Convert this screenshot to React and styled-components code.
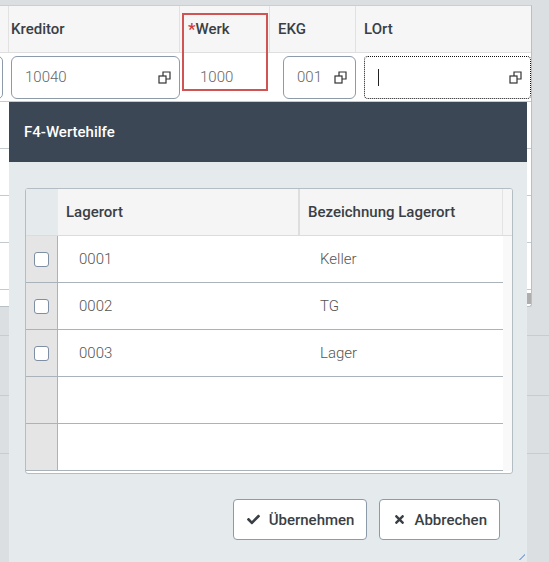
import React from "react";
import styled, { createGlobalStyle } from "styled-components";
import { FaCheck, FaTimes } from "react-icons/fa";

const GlobalStyle = createGlobalStyle`
  html, body {
    margin: 0;
    padding: 0;
    background: #dcdfe2;
    font-family: Roboto, "Liberation Sans", sans-serif;
    overflow: hidden;
  }
`;

const RestoreIcon = () => (
  <svg width="13" height="13" viewBox="0 0 13 13" fill="none" stroke="#333" strokeWidth="1.2">
    <rect x="1" y="5" width="7" height="7" />
    <path d="M5 5 V1 H12 V8 H8" />
  </svg>
);

const rows = [
  { key: "0001", label: "Keller" },
  { key: "0002", label: "TG" },
  { key: "0003", label: "Lager" },
  { key: "", label: "" },
  { key: "", label: "" },
];

const App = () => {
  return (
    <Page>
      <GlobalStyle />
      <TopStrip />
      <BgTable>
        <HeadRow>
          <HeadCell />
          <HeadCell>Kreditor</HeadCell>
          <HeadCell>
            <Req>*</Req>Werk
          </HeadCell>
          <HeadCell>EKG</HeadCell>
          <HeadCell $last>LOrt</HeadCell>
        </HeadRow>
        <InputRow>
          <InputCell $pl={0}>
            <PartialInput />
          </InputCell>
          <InputCell $pl={8}>
            <Field>
              <span>10040</span>
              <RestoreIcon />
            </Field>
          </InputCell>
          <InputCell $pl={0}>
            <PlainValue>1000</PlainValue>
          </InputCell>
          <InputCell $pl={13}>
            <Field>
              <span>001</span>
              <RestoreIcon />
            </Field>
          </InputCell>
          <InputCell $pl={8} $last>
            <Field $focused>
              <Caret />
              <RestoreIcon />
            </Field>
          </InputCell>
        </InputRow>
        <BgRow />
        <BgRow />
        <BgRow />
        <BgRow />
        <BgRow $short>
          <Thumb />
        </BgRow>
        <Highlight />
      </BgTable>
      <GreyRows>
        <GreyLine $h={28} />
        <GreyLine $h={59} />
        <GreyLine $h={57} />
      </GreyRows>

      <Dialog>
        <DialogHeader>F4-Wertehilfe</DialogHeader>
        <DialogBody>
          <HelpTable>
            <HelpHead>
              <CheckHead />
              <HelpHeadCell $sep>Lagerort</HelpHeadCell>
              <HelpHeadCell>Bezeichnung Lagerort</HelpHeadCell>
              <GutterHead />
            </HelpHead>
            {rows.map((row, i) => (
              <HelpRow key={i}>
                <CheckCell>{row.key && <Box />}</CheckCell>
                <HelpCell $pl={21}>{row.key}</HelpCell>
                <HelpCell $pl={20}>{row.label}</HelpCell>
                <Gutter />
              </HelpRow>
            ))}
          </HelpTable>
          <ButtonBar>
            <Button $gap={9}>
              <FaCheck size={13} />
              Übernehmen
            </Button>
            <Button $gap={8}>
              <FaTimes size={13} />
              Abbrechen
            </Button>
          </ButtonBar>
        </DialogBody>
        <Grip />
      </Dialog>
    </Page>
  );
};

const Page = styled.div`
  position: relative;
  width: 549px;
  height: 562px;
  overflow: hidden;
`;

const TopStrip = styled.div`
  height: 5px;
`;

const BgTable = styled.div`
  position: relative;
  width: 531px;
  background: #fff;
  border-top: 1px solid #c9cfd4;
  border-right: 1px solid #b8c0c7;
  border-bottom: 1px solid #b8c0c7;
  border-bottom-right-radius: 3px;
`;

const HeadRow = styled.div`
  display: grid;
  grid-template-columns: 3px 177px 90px 86px 175px;
  height: 46px;
  background: #f6f6f6;
  border-bottom: 1px solid #dedede;
`;

const HeadCell = styled.div`
  display: flex;
  align-items: center;
  padding-left: 8px;
  border-right: ${(p) => (p.$last ? "none" : "1px solid #e2e2e2")};
  font-size: 15px;
  font-weight: 500;
  color: #3a3f45;
  white-space: nowrap;
  overflow: hidden;
`;

const Req = styled.span`
  color: #d0393e;
  font-size: 17px;
`;

const InputRow = styled.div`
  display: grid;
  grid-template-columns: 3px 177px 90px 86px 175px;
  height: 48px;
  border-bottom: 1px solid #c3cad0;
`;

const InputCell = styled.div`
  display: flex;
  align-items: center;
  padding: 3px 0 3px ${(p) => p.$pl}px;
  overflow: hidden;
`;

const PartialInput = styled.div`
  width: 10px;
  height: 41px;
  margin-left: -7px;
  border: 1px solid #8d9aaa;
  border-radius: 6px;
`;

const Field = styled.div`
  flex: 1;
  height: 41px;
  display: flex;
  align-items: center;
  justify-content: space-between;
  padding: 0 8px 0 13px;
  border: 1px ${(p) => (p.$focused ? "dotted #111" : "solid #8d9aaa")};
  border-radius: ${(p) => (p.$focused ? "4px" : "6px")};
  font-size: 15px;
  font-weight: 300;
  color: #666;
`;

const Caret = styled.div`
  width: 1px;
  height: 17px;
  background: #222;
`;

const PlainValue = styled.div`
  padding-left: 20px;
  font-size: 15px;
  font-weight: 300;
  color: #666;
`;

const Highlight = styled.div`
  position: absolute;
  left: 182px;
  top: 7px;
  width: 82px;
  height: 74px;
  border: 2px solid #d05454;
`;

const BgRow = styled.div`
  position: relative;
  height: ${(p) => (p.$short ? "16px" : "46px")};
  border-bottom: ${(p) => (p.$short ? "none" : "1px solid #c3cad0")};
`;

const Thumb = styled.div`
  position: absolute;
  right: 0;
  top: 3px;
  width: 4px;
  height: 11px;
  background: #aeaeae;
`;

const GreyRows = styled.div`
  display: flex;
  flex-direction: column;
`;

const GreyLine = styled.div`
  height: ${(p) => p.$h}px;
  border-bottom: 1px solid #c8ccd0;
`;

const Dialog = styled.div`
  position: absolute;
  left: 9px;
  top: 102px;
  width: 518px;
  height: 470px;
  background: #e5eaed;
  display: flex;
  flex-direction: column;
`;

const DialogHeader = styled.div`
  height: 60px;
  display: flex;
  align-items: center;
  padding-left: 15px;
  background: #3b4754;
  color: #fff;
  font-size: 15px;
  font-weight: 500;
`;

const DialogBody = styled.div`
  padding: 26px 14px 0 16px;
  display: flex;
  flex-direction: column;
`;

const HelpTable = styled.div`
  height: 284px;
  overflow: hidden;
  background: #fff;
  border: 1px solid #b4bcc4;
  border-radius: 3px;
`;

const HelpHead = styled.div`
  display: grid;
  grid-template-columns: 32px 242px 203px 1fr;
  height: 46px;
  border-bottom: 1px solid #dcdcdc;
  background: #f5f5f5;
`;

const CheckHead = styled.div`
  background: #e5eaed;
`;

const HelpHeadCell = styled.div`
  display: flex;
  align-items: center;
  padding-left: 8px;
  font-size: 15px;
  font-weight: 500;
  color: #3a3f45;
  border-right: ${(p) => (p.$sep ? "2px solid #dedede" : "1px solid #e4e4e4")};
  white-space: nowrap;
`;

const GutterHead = styled.div``;

const HelpRow = styled.div`
  display: grid;
  grid-template-columns: 32px 242px 203px 1fr;
  height: 47px;
`;

const CheckCell = styled.div`
  display: flex;
  align-items: center;
  justify-content: center;
  background: #e5e5e5;
  border-right: 1px solid #aab2ba;
  border-bottom: 1px solid #aab2ba;
`;

const Box = styled.div`
  width: 13px;
  height: 13px;
  background: #fff;
  border: 1px solid #7f8fa3;
  border-radius: 3px;
`;

const HelpCell = styled.div`
  display: flex;
  align-items: center;
  padding-left: ${(p) => p.$pl}px;
  font-size: 15px;
  font-weight: 300;
  color: #555;
  border-bottom: 1px solid #aab2ba;
`;

const Gutter = styled.div`
  background: #f9f9f9;
`;

const ButtonBar = styled.div`
  display: flex;
  justify-content: flex-end;
  gap: 12px;
  padding: 25px 13px 0 0;
`;

const Button = styled.button`
  height: 41px;
  display: flex;
  align-items: center;
  gap: ${(p) => p.$gap}px;
  padding: 0 12px 0 13px;
  background: #fff;
  border: 1px solid #8d9aaa;
  border-radius: 4px;
  font-family: Roboto, "Liberation Sans", sans-serif;
  font-size: 15px;
  font-weight: 500;
  color: #3a3f45;
  cursor: pointer;
`;

const Grip = styled.div`
  position: absolute;
  right: 2px;
  top: 452px;
  width: 6px;
  height: 6px;
  background: linear-gradient(135deg, transparent 50%, #8fb0d8 50%, #8fb0d8 60%, transparent 60%);
`;

export default App;
